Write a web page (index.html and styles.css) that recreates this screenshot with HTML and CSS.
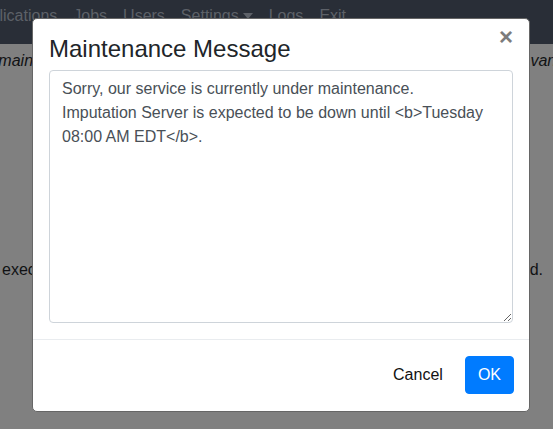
FILE: index.html
```html
<!DOCTYPE html>
<html>
<head>
<meta charset="utf-8">
<link rel="stylesheet" href="styles.css">
</head>
<body>
<nav class="navbar">
  <div class="nav-links">
    <span class="nav-link">Applications</span>
    <span class="nav-link">Jobs</span>
    <span class="nav-link">Users</span>
    <span class="nav-link">Settings <span class="caret"></span></span>
    <span class="nav-link">Logs</span>
    <span class="nav-link">Exit</span>
  </div>
</nav>
<main class="page">
  <p class="line line-italic"><span class="left">under maintenance and</span><span class="right">various</span></p>
  <p class="line line-plain"><span class="left">executed</span><span class="right">finished.</span></p>
</main>

<div class="modal" role="dialog">
  <div class="modal-header">
    <h4 class="modal-title">Maintenance Message</h4>
    <button class="close" type="button">×</button>
  </div>
  <div class="modal-body">
    <textarea class="form-control">Sorry, our service is currently under maintenance.
Imputation Server is expected to be down until &lt;b&gt;Tuesday 08:00 AM EDT&lt;/b&gt;.</textarea>
  </div>
  <div class="modal-footer">
    <button class="btn btn-link" type="button">Cancel</button>
    <button class="btn btn-primary" type="button">OK</button>
  </div>
</div>
</body>
</html>
```

FILE: styles.css
```css
* { box-sizing: border-box; }
html, body {
  margin: 0;
  padding: 0;
  height: 100%;
  overflow: hidden;
}
body {
  background: #808080;
  font-family: "Liberation Sans", Arial, Helvetica, sans-serif;
  font-size: 16px;
  line-height: 1.5;
  color: #111214;
}
.navbar {
  height: 44px;
  background: #292e37;
  padding-top: 4px;
}
.nav-links {
  display: flex;
  margin-left: -37px;
  white-space: nowrap;
}
.nav-link {
  color: #5d6168;
  padding: 0 8px;
  display: inline-flex;
  align-items: center;
}
.caret {
  display: inline-block;
  width: 0;
  height: 0;
  margin-left: 4px;
  border-left: 5px solid transparent;
  border-right: 5px solid transparent;
  border-top: 6px solid #5d6168;
}
.page {
  padding: 0;
}
.line {
  margin: 0;
  display: flex;
  justify-content: space-between;
  white-space: nowrap;
  overflow: hidden;
}
.line-italic {
  font-style: italic;
  margin-top: 5px;
  margin-left: -47px;
  margin-right: -29px;
}
.line-plain {
  margin-top: 185px;
  margin-left: 2px;
  margin-right: 10px;
}
.modal {
  position: absolute;
  left: 32px;
  top: 18px;
  width: 498px;
  height: 394px;
  background: #fff;
  border: 1px solid #666;
  border-radius: 5px;
  display: flex;
  flex-direction: column;
}
.modal-header {
  display: flex;
  align-items: flex-start;
  justify-content: space-between;
  padding: 16px 16px 6px;
}
.modal-title {
  margin: 0;
  font-size: 24px;
  font-weight: 400;
  line-height: 1.2;
  color: #212529;
}
.close {
  border: 0;
  background: transparent;
  padding: 0;
  margin: -10px 0 0 0;
  font-family: "Liberation Sans", Arial, sans-serif;
  font-size: 24px;
  font-weight: 700;
  line-height: 1;
  color: #7c7c7c;
}
.modal-body {
  padding: 0 16px 16px;
}
.form-control {
  display: block;
  width: 100%;
  height: 253px;
  margin: 0;
  padding: 6px 12px;
  border: 1px solid #ced4da;
  border-radius: 4px;
  font-family: "Liberation Sans", Arial, sans-serif;
  font-size: 16px;
  line-height: 1.5;
  color: #495057;
  resize: vertical;
}
.modal-footer {
  flex: 1;
  display: flex;
  justify-content: flex-end;
  align-items: center;
  gap: 9px;
  padding: 0 15px;
  border-top: 1px solid #e9ecef;
}
.btn {
  font-family: "Liberation Sans", Arial, sans-serif;
  font-size: 16px;
  line-height: 1.5;
  height: 38px;
  padding: 6px 12px;
  border: 1px solid transparent;
  border-radius: 4px;
}
.btn-link {
  background: transparent;
  color: #111;
}
.btn-primary {
  background: #007bff;
  border-color: #007bff;
  color: #fff;
}
```
